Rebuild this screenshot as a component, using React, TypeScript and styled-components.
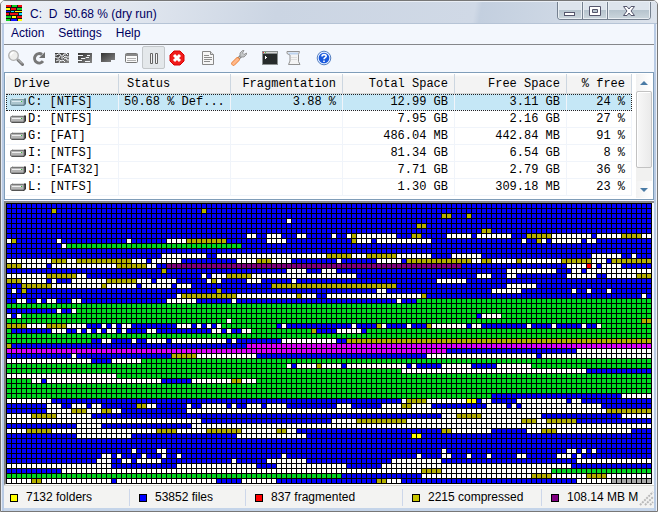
import React from "react";
import styled, { createGlobalStyle } from "styled-components";

const GlobalStyle = createGlobalStyle`
  * { box-sizing: border-box; }
  body { margin: 0; background: #fff; }
  button { font: inherit; }
`;

const Window = styled.main`
  display: flex;
  flex-direction: column;
  min-height: 100vh;
  padding: 0 3px 3px;
  border: 1px solid #777;
  border-radius: 5px 5px 0 0;
  background: #f3f7fd;
  box-shadow: inset 1px 0 #e6ebf3, inset -1px 0 #eef2f8, inset 3px 0 #b9cbe4, inset -3px 0 #b9cbe4, inset 0 -3px #c4d4e9;
  font-family: "Liberation Sans", Arial, sans-serif;
  font-size: 12px;
  overflow: hidden;
`;

const TitleBar = styled.header`
  display: flex;
  align-items: flex-start;
  height: 23px;
  margin: 0 -3px;
  padding: 4px 6px 0 5px;
  border-bottom: 1px solid #b6c4d6;
  box-shadow: inset 0 1px #e9eef5;
  background: linear-gradient(100deg, #eef1f6 0, #dfe5ee 22%, #cbd5e3 42%, #d0d9e6 72%, #c3cfdf 73%, #cdd7e4 84%, #dce3ec 100%);
`;

const Title = styled.h1`
  flex: 1;
  margin: 0 0 0 8px;
  color: #00005f;
  font-size: 12px;
  font-weight: 400;
  line-height: 18px;
  white-space: pre;
`;

const Caption = styled.div`
  display: flex;
  height: 18px;
  margin-top: -3px;
  border: 1px solid #74808f;
  border-top: 0;
  border-radius: 0 0 4px 4px;
  overflow: hidden;
`;

const CaptionButton = styled.button<{ $wide?: boolean }>`
  display: grid;
  place-items: center;
  width: ${(p) => (p.$wide ? 42 : 25)}px;
  padding: 0;
  border: 0;
  border-right: ${(p) => (p.$wide ? 0 : 1)}px solid #74808f;
  box-shadow: inset 1px -1px #e9eef3, inset -1px 0 #e9eef3;
  background: linear-gradient(#dde4ec 0 45%, #b5c3cd 46%, #cbd6dd);
`;

const MenuBar = styled.nav`
  display: flex;
  gap: 2px;
  height: 21px;
  padding-left: 1px;
  border-bottom: 1px solid #85878b;
`;

const MenuItem = styled.button`
  height: 18px;
  padding: 0 6px;
  border: 0;
  background: transparent;
  color: #00005f;
  line-height: 17px;
`;

const Toolbar = styled.div`
  display: flex;
  height: 27px;
`;

const Tool = styled.button<{ $gap?: boolean; $pressed?: boolean }>`
  display: grid;
  place-items: center;
  width: 23px;
  height: 23px;
  margin-left: ${(p) => (p.$gap ? 8 : 0)}px;
  margin-top: 1px;
  padding: 0;
  border: 1px solid ${(p) => (p.$pressed ? "#c3c7ca" : "transparent")};
  border-radius: 2px;
  background: ${(p) => (p.$pressed ? "#e4e8eb" : "transparent")};
  svg { display: block; }
`;

const DrivePanel = styled.section`
  display: flex;
  height: 128px;
  padding: 1px;
  border: 1px solid #7f9db9;
  background: #fff;
`;

const DriveTable = styled.table`
  flex: 1;
  width: 0;
  height: 122px;
  table-layout: fixed;
  border-collapse: separate;
  border-spacing: 0;
  font-family: "Liberation Mono", "Courier New", monospace;
  font-size: 12px;
  color: #000;
`;

const Col = styled.col<{ $w: number }>`
  width: ${(p) => p.$w}px;
`;

const HeadCell = styled.th<{ $right?: boolean }>`
  height: 20px;
  padding: 1px 6px 0 8px;
  border-right: 1px solid #ccd6e0;
  border-bottom: 1px solid #d5d5d5;
  background: linear-gradient(#fff, #f3f3f3 3px);
  font-weight: 400;
  line-height: 17px;
  text-align: ${(p) => (p.$right ? "right" : "left")};
  white-space: nowrap;
`;

const Row = styled.tr<{ $selected?: boolean }>`
  background: ${(p) => (p.$selected ? "#c5e7f6" : "#fff")};
  outline: ${(p) => (p.$selected ? "1px dotted #222" : "none")};
  outline-offset: -1px;
`;

const Cell = styled.td<{ $right?: boolean }>`
  height: 17px;
  padding: 0 6px 0 5px;
  border-right: 1px solid #f0f4fa;
  border-bottom: 1px solid #f0f4fa;
  line-height: 16px;
  text-align: ${(p) => (p.$right ? "right" : "left")};
  white-space: nowrap;
  overflow: hidden;
`;

const DriveName = styled.span`
  display: flex;
  align-items: center;
  gap: 2px;
  margin-left: -1px;
  white-space: pre;
`;

const ScrollBar = styled.div`
  display: flex;
  flex-direction: column;
  width: 16px;
  margin-left: 4px;
  background: #f1f1f0;
`;

const ScrollArrow = styled.button`
  display: grid;
  place-items: center;
  height: 17px;
  padding: 0;
  border: 0;
  background: linear-gradient(90deg, #f2f2f2, #fff);
`;

const Thumb = styled.div`
  height: 77px;
  margin-bottom: auto;
  border: 1px solid #c2c2c2;
  border-radius: 2px;
  background: linear-gradient(90deg, #f8f8f8, #eaeaea);
  box-shadow: inset 1px 1px #fff;
`;

const MapPanel = styled.section`
  flex: 1 0 auto;
  display: flex;
  margin-top: 1px;
  border-top: 2px solid #888;
  border-left: 2px solid #808080;
  border-bottom: 1px solid #fff;
  overflow: hidden;
  svg { display: block; flex: none; }
`;

const StatusBar = styled.footer`
  display: flex;
  height: 23px;
  padding: 3px 0 2px 1px;
  background: #f3f3f2;
  border-top: 1px solid #d9d9d2;
`;

const StatusItem = styled.div<{ $w?: number }>`
  flex: ${(p) => (p.$w ? `0 0 ${p.$w}px` : "1 1 0")};
  display: flex;
  align-items: center;
  gap: 8px;
  min-width: 0;
  padding-left: 9px;
  border-right: ${(p) => (p.$w ? 1 : 0)}px solid #cdd7ea;
  overflow: hidden;
  white-space: nowrap;
  line-height: 17px;
  &:first-child { padding-left: 5px; }
`;

const Swatch = styled.i<{ $color: string }>`
  flex: none;
  width: 8px;
  height: 8px;
  border: 1px solid #000;
  background: ${(p) => p.$color};
`;

const Grip = styled.svg`
  flex: none;
  align-self: flex-end;
`;

/* ---- cluster map ---- */

const COLS = 129;
const COLORS: Record<string, string> = {
  b: "#0000ff",
  w: "#ffffff",
  o: "#b5b000",
  g: "#00d820",
  p: "#800080",
  m: "#dc00ff",
  r: "#ff0000",
  y: "#ffff00",
  a: "#a9a9a9",
};

/* One line per row: the base colour, then runs "colour first-last". */
const CLUSTERS = `b
b o9 o39
b o87-88 o92
b w56
b o82-83
b o95-96
b w48-49 w52-54 w58-59 w65 w68 o69 w70-77 o81-82 w88-92 w94-100 o104-108 w109-116 w118-122 o123-126 w127-128
b w0 o1 w10 w24 w32-35 o36-43 w52-55 o69 w70-72 w74-84 w103 o106 w107 w109-114 w116-117
b w11 g12-46
b
b w31-39 w42-63 o64-68 w69-71 o72-77 w78-84 w89-94 w117-122 w125
b w0-8 o9-11 w12-13 o14-24 w25-27 w29-34 w46-49 o50-52 w53-56 w66 w74-78 o80-92 w93-94 o95-96 w97-101 o102 w103-110 o111-116 w117-119 o121-128
b o0-2 w3-7 w9-21 o22-27 w28-29 p32-90 w112-115 r116 w117 w119-122
b o31 w56-59 w63-65 w100-109 w113-114 w116-128
b w0-7 o8-13 w14-15 w39 w41-43 o44-48 w49-69 w94-96 w100-101 w112-117 w120-125 o126-128
b o0-2 w3-7 w9 w13-19 o20-25 w26-28 w30-33 w40 o41 w42 w48-50 w57 w86-91
b o3-8 w9-18 o19 w20-25 w27-32 w34-36 o53-77 w100-105
b w1 o3 o42 w74-75 w97-102 w113 w116 w120
b w34 o35-45 w46-57 o58 w59-61 w64-82 o83 w127
b w2-3 w6 w8-9 w13-14 w32-37 w45 w78 g82-128
g
g b0-9 w10 b11-12 w13
g w0 b1 w2 b94 w95-98
g w44 o127-128
b o0-3 w4-7 o8-11 w12-15 w19 w21 w23-24 w34-36 w38 w40 w42 g43-53 w55 w69 o74 w75 w80 o84 w85-91 w93-94 w104 w109 w115 w118 g119-128
b g0 w9-11 w14 w16 w18 w20-21 w23 w28-29 w41-42 w44 w47-48 g49-60 o61 w66-70 g72-128
g
b g0-16 w19-20 w25 w28-31 w33-43 w45 w55-65 o68-128
b o0 m48-128
m b88-113 w114-128
b w13 o33-37 w38-49 w84-105 w107-128
g w0-16 b17-20 w21-26
g w56 b57 w58-61 o62 w63-66 b67 w68-79 b80 w81 b82-86 w87-92 b93-97 w98-104
g w79-115 b116-128
g w0-21
g w5-6 b7 w8-30 b31-36 w37-44 o45-46 w47-49
g
g
g b97-122 w123-128
b w0-8 w79 o80-83 w84-91 y92-93 w95-96 w102-111 w113-114
b w8-10 w13-15 w17-18 o26-27 w28-29 w36 w39-43 w45 w48-50 w52-55 w66-68 w75-78 o79-80 w81-84 w96-99 w101 w103-118
b w8-12 o13-15 w16-18 o19-20 w21-22 w36-119 o120-128
b w0-4 o5-9 w10-16 w87-89 o90-94 w95-106 w123-128
b w0-38 w65-69 o70-79 w80-102 o103-105 w106-107 o108-113
b w14-18 w37-128
b w0-3 o4-8 w9-29 o30-33 w34-39 o40-46 w47-53 o54-55 w56-57 o87-88 w89-96 w104-106 o107-109 w110-124
b w14-24 w46-59 y81-82
b
b
b w25 w30-31 w87 w112-113 w115 w117
b w19-20 w22 w27 w31 w34 w55 w82 w87-88 w92 w96 w102-103 w110-112 w114
b w18-20 w23-24 w26-30 w45 w52-59 w77-86 w114-128
b w0-20 w34-49 w54-67 w75-112
b w11-82 o83-86 w87-108 g109-128
b g0-66 w83-104 o105-108 w109-115 o116-119 w120-128
b w0-4 o5-6 w7-20 w22-41 w47-53 o74-75 w76-78 w114-120 a121-128`.split("\n");

function ClusterMap() {
  const w = COLS * 5 + 1;
  const h = CLUSTERS.length * 5 + 1;
  return (
    <svg width={w} height={h} shapeRendering="crispEdges" role="img" aria-label="Cluster map">
      <defs>
        <pattern id="grid" width="5" height="5" patternUnits="userSpaceOnUse">
          <path d="M0 0H5V1H1V5H0Z" fill="#000" />
        </pattern>
      </defs>
      {CLUSTERS.map((line, y) => {
        const [base, ...runs] = line.split(" ");
        return (
          <g key={y}>
            <rect x={0} y={y * 5} width={w} height={5} fill={COLORS[base]} />
            {runs.map((run) => {
              const [a, z = a] = run.slice(1).split("-");
              return (
                <rect key={run} x={Number(a) * 5} y={y * 5} width={(Number(z) - Number(a) + 1) * 5} height={5} fill={COLORS[run[0]]} />
              );
            })}
          </g>
        );
      })}
      <rect width={w} height={h} fill="url(#grid)" />
      <path d={`M${w - 1} 0H${w}V${h}H0V${h - 1}H${w - 1}Z`} fill="#000" />
    </svg>
  );
}

/* ---- icons ---- */

const icon = { width: 16, height: 16, viewBox: "0 0 16 16", "aria-hidden": true } as const;

const AppIcon = () => (
  <svg {...icon} shapeRendering="crispEdges">
    <rect width="16" height="16" fill="#111" />
    <path fill="#f01010" d="M0 0h5v2H0zM12 0h4v2h-4zM5 3h5v2H5zM0 8h3v2H0zM4 8h8v2H4zM11 11h5v2h-5z" />
    <path fill="#10d020" d="M6 0h5v2H6zM11 3h5v2h-5zM0 11h5v2H0zM0 14h4v2H0z" />
    <path fill="#ffff10" d="M0 3h4v2H0zM9 6h7v1H9zM6 11h4v2H6zM12 14h4v2h-4z" />
    <path fill="#1010ff" d="M0 6h4v1H0zM5 14h6v2H5z" />
    <path fill="#10e0ff" d="M5 6h3v1H5zM13 8h3v2h-3z" />
  </svg>
);

const SearchIcon = () => (
  <svg {...icon}>
    <path d="M10 10L14.5 14.5" stroke="#777" strokeWidth="3" strokeLinecap="round" />
    <path d="M9.5 9L14 13.5" stroke="#ccc" />
    <circle cx="5.5" cy="5.5" r="4.8" fill="#eeeeec" stroke="#b0b0b0" strokeWidth="1.3" />
    <path d="M2.700 5.500a3 3 0 0 1 3-3" stroke="#fff" strokeWidth="1.500" fill="none" />
  </svg>
);

const RefreshIcon = () => (
  <svg {...icon}>
    <path d="M12 11.200A4.700 4.700 0 1 1 11 4.500" fill="none" stroke="#777" strokeWidth="3" />
    <path d="M14 2v6H8z" fill="#6e6e6e" />
  </svg>
);

const Gradient = ({ id }: { id: string }) => (
  <defs>
    <linearGradient id={id} x1="0" y1="0" x2="1" y2="1">
      <stop stopColor="#333" />
      <stop offset="1" stopColor="#888" />
    </linearGradient>
  </defs>
);

const DefragIcon = () => (
  <svg {...icon}>
    <Gradient id="dark1" />
    <path fill="url(#dark1)" d="M1 3h14v10H1z" />
    <path stroke="#f3f5f8" fill="none" d="M1 5h2l1-1h2l1 2h2l1-2h2M1 7l2 1h2l1-2M7 8h2l2-2 2 1h2M2 11l2-1h2l1 1 2-1 2 2M10 9l2-1 1 2h2M5 13l1-2M12 3l2 2" />
  </svg>
);

const QuickIcon = () => (
  <svg {...icon}>
    <Gradient id="dark2" />
    <path fill="url(#dark2)" d="M1 3h14v10H1z" />
    <path stroke="#f3f5f8" fill="none" d="M1 5.500h5M10 5.500h3M4 8.500h4l1-1h3M1 10.500h4M8 11.500h5" />
  </svg>
);

const FullIcon = () => (
  <svg {...icon}>
    <Gradient id="dark3" />
    <path fill="url(#dark3)" d="M1 3h14v7h-4v2H1z" />
  </svg>
);

const WindowIcon = () => (
  <svg {...icon}>
    <rect x="2.5" y="3.5" width="12" height="9" rx="1" fill="#fafafa" stroke="#777" />
    <path d="M2 4h13v2H2z" fill="#888" />
    <path d="M4 8.500h9M4 10.500h9" stroke="#b0b0b0" />
  </svg>
);

const PauseIcon = () => (
  <svg {...icon}>
    <path d="M4.500 3.500h2v10h-2zM9.500 3.500h2v10h-2z" fill="#f4f4f4" stroke="#666" />
  </svg>
);

const StopIcon = () => (
  <svg {...icon}>
    <path d="M5 1h6l4 4v6l-4 4H5l-4-4V5z" fill="#f01c1c" stroke="#d80000" />
    <path d="M5 5l6 6M11 5l-6 6" stroke="#fff" strokeWidth="3" />
  </svg>
);

const ReportIcon = () => (
  <svg {...icon}>
    <path d="M2.500 1.500h8l3 3v10h-11z" fill="#f6f6f6" stroke="#888" />
    <path d="M10.500 1.500v3h3" fill="#ddd" stroke="#888" />
    <path d="M4 5.500h5M4 7.500h8M4 9.500h8M4 11.500h6" stroke="#8c8c8c" />
  </svg>
);

const WrenchIcon = () => (
  <svg {...icon}>
    <path d="M7 9l4-4" stroke="#8d8d8d" strokeWidth="3" />
    <path d="M7 9l4-4" stroke="#c8cacb" />
    <path d="M9 6.500V3l2.500-2.500H13L11.500 3l1.500 1.500L15.500 3v1.500L13 7H9.500z" fill="#c3c6c7" stroke="#858585" strokeWidth=".8" />
    <path d="M2.500 13.500L6.500 9.500" stroke="#ea8038" strokeWidth="4.500" strokeLinecap="round" />
    <path d="M2.500 13.500L6.500 9.500" stroke="#ffb88a" strokeWidth="3" strokeLinecap="round" />
  </svg>
);

const ConsoleIcon = () => (
  <svg {...icon} shapeRendering="crispEdges">
    <path d="M0 1h16v14H0z" fill="#8b9090" />
    <path d="M1 4h14v10H1z" fill="#272b2b" />
    <path d="M1 2h14v1H1z" fill="#d6d6d6" />
    <path d="M1 2h1v1H1z" fill="#e33" />
    <path d="M3 2h1v1H3z" fill="#6b4" />
    <path d="M3 6h1v1h1v1H4v1H3z" fill="#fff" />
  </svg>
);

const ScriptIcon = () => (
  <svg {...icon}>
    <path d="M2 1.500h12.500l-1 3v7l1.500 3H3.500L5 11V5L2 3.500z" fill="#f4f4f4" stroke="#929292" />
    <path d="M2.500 2.500h10.500v2H5z" fill="#bcd2ee" />
    <path d="M6 7.500h6M6 9.500h6" stroke="#ddd" />
  </svg>
);

const HelpIcon = () => (
  <svg {...icon}>
    <circle cx="8" cy="8" r="6.800" fill="#e3edff" stroke="#547fc0" />
    <circle cx="8" cy="8" r="5.300" fill="#1959dc" />
    <path d="M6 6.500C6 4 10.200 4 10.200 6.300C10.200 7.700 8 7.700 8 9.300M8 10.500v1.500" stroke="#fff" strokeWidth="1.600" fill="none" />
  </svg>
);

const DriveIcon = ({ tint }: { tint?: boolean }) => (
  <svg width="16" height="10" viewBox="0 0 16 10" aria-hidden>
    <path d="M1 3l2-2h12l1 1v5l-2 2H2L.5 7.500z" fill={tint ? "#557685" : "#333"} />
    <path d="M1 3l2-2h12l-2 2z" fill={tint ? "#d7e9ef" : "#ddd"} />
    <rect x=".5" y="2.500" width="13.500" height="5.500" rx="1" fill={tint ? "#abc5ce" : "#b4b4b4"} stroke={tint ? "#7d98a3" : "#777"} />
    <path d="M2 4.500h9" stroke={tint ? "#dceaf0" : "#eee"} />
    <path d="M11 4h1v1h-1z" fill="#3b3" />
  </svg>
);

const MinIcon = () => (
  <svg width="12" height="12" viewBox="0 0 12 12" aria-hidden>
    <rect x=".5" y="7.500" width="10" height="3" fill="#fff" stroke="#55566c" />
  </svg>
);

const MaxIcon = () => (
  <svg width="12" height="12" viewBox="0 0 12 12" aria-hidden>
    <path d="M.5 1.500h11v9H.5zM3.500 4.500h5v3h-5z" fill="#fff" fillRule="evenodd" stroke="#55566c" />
  </svg>
);

const CloseIcon = () => (
  <svg width="12" height="12" viewBox="0 0 12 12" aria-hidden>
    <path d="M.5 1.500h3.500l2 2.500 2-2.500h3.500L8 6l3.500 4.500H8L6 8l-2 2.500H.5L4 6z" fill="#fff" stroke="#55566c" />
  </svg>
);

/* ---- data ---- */

const TOOLS: { label: string; Icon: React.FC; gap?: boolean; pressed?: boolean }[] = [
  { label: "Analyze", Icon: SearchIcon },
  { label: "Repeat", Icon: RefreshIcon },
  { label: "Defragment", Icon: DefragIcon },
  { label: "Quick optimization", Icon: QuickIcon },
  { label: "Full optimization", Icon: FullIcon },
  { label: "Optimize MFT", Icon: WindowIcon },
  { label: "Pause", Icon: PauseIcon, pressed: true },
  { label: "Stop", Icon: StopIcon },
  { label: "Report", Icon: ReportIcon, gap: true },
  { label: "Options", Icon: WrenchIcon, gap: true },
  { label: "Console", Icon: ConsoleIcon, gap: true },
  { label: "Script", Icon: ScriptIcon },
  { label: "Help", Icon: HelpIcon, gap: true },
];

const HEADINGS = ["Drive", "Status", "Fragmentation", "Total Space", "Free Space", "% free"];

const DRIVES = [
  ["C: [NTFS]", "50.68 % Def...", "3.88 %", "12.99 GB", "3.11 GB", "24 %"],
  ["D: [NTFS]", "", "", "7.95 GB", "2.16 GB", "27 %"],
  ["G: [FAT]", "", "", "486.04 MB", "442.84 MB", "91 %"],
  ["I: [NTFS]", "", "", "81.34 GB", "6.54 GB", "8 %"],
  ["J: [FAT32]", "", "", "7.71 GB", "2.79 GB", "36 %"],
  ["L: [NTFS]", "", "", "1.30 GB", "309.18 MB", "23 %"],
];

const LEGEND = [
  { color: "#ffff00", text: "7132 folders", width: 125 },
  { color: "#0000ff", text: "53852 files", width: 116 },
  { color: "#ff0000", text: "837 fragmented", width: 157 },
  { color: "#c8c400", text: "2215 compressed", width: 139 },
  { color: "#800080", text: "108.14 MB M" },
];

export default function App() {
  return (
    <>
      <GlobalStyle />
      <Window>
        <TitleBar>
          <AppIcon />
          <Title>{"C:  D  50.68 % (dry run)"}</Title>
          <Caption>
            <CaptionButton aria-label="Minimize"><MinIcon /></CaptionButton>
            <CaptionButton aria-label="Maximize"><MaxIcon /></CaptionButton>
            <CaptionButton $wide aria-label="Close"><CloseIcon /></CaptionButton>
          </Caption>
        </TitleBar>
        <MenuBar>
          <MenuItem>Action</MenuItem>
          <MenuItem>Settings</MenuItem>
          <MenuItem>Help</MenuItem>
        </MenuBar>
        <Toolbar role="toolbar">
          {TOOLS.map(({ label, Icon, gap, pressed }) => (
            <Tool key={label} aria-label={label} aria-pressed={pressed} $gap={gap} $pressed={pressed}>
              <Icon />
            </Tool>
          ))}
        </Toolbar>
        <DrivePanel>
          <DriveTable>
            <colgroup>
              {[113, 112, 112, 112, 112].map((w, i) => <Col key={i} $w={w} />)}
              <col />
            </colgroup>
            <thead>
              <tr>
                {HEADINGS.map((h, i) => <HeadCell key={h} $right={i > 1} scope="col">{h}</HeadCell>)}
              </tr>
            </thead>
            <tbody>
              {DRIVES.map((cells, r) => (
                <Row key={cells[0]} $selected={r === 0}>
                  {cells.map((text, i) => (
                    <Cell key={i} $right={i > 1}>
                      {i === 0 ? <DriveName><DriveIcon tint={r === 0} />{text}</DriveName> : text}
                    </Cell>
                  ))}
                </Row>
              ))}
            </tbody>
          </DriveTable>
          <ScrollBar>
            <ScrollArrow aria-label="Scroll up">
              <svg width="8" height="4" aria-hidden><path d="M0 4l4-4 4 4z" fill="#4a7ba5" /></svg>
            </ScrollArrow>
            <Thumb />
            <ScrollArrow aria-label="Scroll down">
              <svg width="8" height="4" aria-hidden><path d="M0 0h8L4 4z" fill="#4a7ba5" /></svg>
            </ScrollArrow>
          </ScrollBar>
        </DrivePanel>
        <MapPanel>
          <ClusterMap />
        </MapPanel>
        <StatusBar>
          {LEGEND.map(({ color, text, width }) => (
            <StatusItem key={text} $w={width}>
              <Swatch $color={color} />
              {text}
            </StatusItem>
          ))}
          <Grip width="15" height="15" viewBox="0 0 15 15" aria-hidden>
            <path d="M1 14L14 1M6 14l8-8M11 14l3-3" stroke="#b9b9b9" strokeWidth="2" strokeDasharray="2 1" />
          </Grip>
        </StatusBar>
      </Window>
    </>
  );
}
